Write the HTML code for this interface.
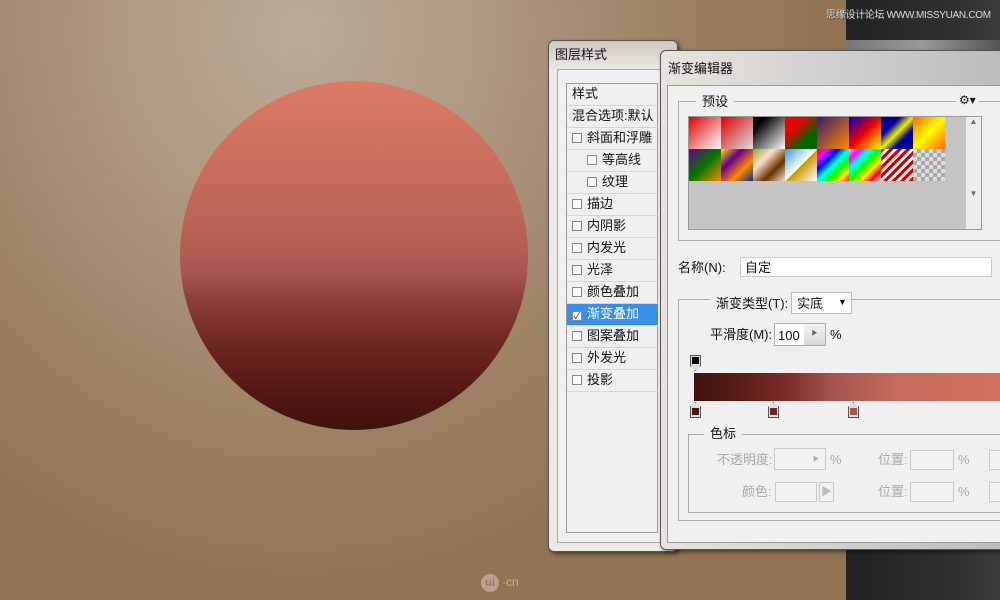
<!DOCTYPE html>
<html><head><meta charset="utf-8">
<style>
*{margin:0;padding:0;box-sizing:border-box}
body{width:1000px;height:600px;overflow:hidden;position:relative;font-family:"Liberation Sans","Noto Sans CJK SC",sans-serif;font-size:12px;color:#111;
background:radial-gradient(ellipse 520px 560px at 300px 30px,#bcab98 0%,#ad967e 40%,#9c7f62 75%,#927455 100%);}
.abs{position:absolute}
.circle{left:180px;top:81px;width:348px;height:349px;border-radius:50%;
background:linear-gradient(#dc7b66 0%,#c96d5e 25%,#b35e54 48%,#a95652 55%,#8a3f39 63%,#6e2722 75%,#561914 88%,#3f120d 100%);}
.dark{left:846px;top:0;width:154px;height:600px;background:linear-gradient(90deg,#222 0%,#2a2a2a 40%,#303030 70%,#3c3c3c 100%)}
.wm{top:10px;left:826px;color:#ddd;font-size:10px;white-space:nowrap;text-shadow:1px 1px 0 #333;line-height:12px;letter-spacing:-0.3px}
.dlg1{left:548px;top:40px;width:130px;height:512px;border:1px solid #555;border-radius:6px;background:linear-gradient(#cfc7be,#ece9e6 30px);box-shadow:2px 2px 4px rgba(0,0,0,.5)}
.dlg1 .in{position:absolute;left:8px;top:28px;right:0;bottom:8px;background:#f0f0f0;border:1px solid #aaa}
.list{left:566px;top:83px;width:92px;height:450px;border:1px solid #999;background:#f0f0f0}
.row{position:absolute;left:0;width:91px;height:22px;border-bottom:1px solid #d6d6d6;font-size:13px;line-height:19px;padding-left:5px;white-space:nowrap;overflow:hidden}
.cb{display:inline-block;width:10px;height:10px;border:1px solid #888;background:#fafafa;margin-right:5px;vertical-align:-1px}
.sel{background:#3a8ee6;color:#fff}
.dlg2{left:660px;top:50px;width:350px;height:500px;border:1px solid #555;border-radius:6px;background:linear-gradient(90deg,#e8e3de,#ccc 60%,#bbb);box-shadow:2px 2px 4px rgba(0,0,0,.5)}
.dlg2 .in{position:absolute;left:6px;top:34px;right:0;bottom:6px;background:#f0f0f0;border:1px solid #999}
.fs{border:1px solid #aaa}
.lbl{font-size:13px;white-space:nowrap;line-height:15px}
.sw{position:absolute;width:32px;height:32px}
.inp{background:#fff;border:1px solid #ccc}
.gray{color:#a8a8a8}
.dis{border:1px solid #c8c8c8;background:#f2f2f2}
</style></head><body>
<div class="abs circle"></div>
<div class="abs dark"></div>
<div class="abs" style="left:846px;top:40px;width:154px;height:12px;background:linear-gradient(90deg,#777,#999,#555)"></div>
<div class="abs wm">思缘设计论坛 WWW.MISSYUAN.COM</div>

<div class="abs dlg1"><div class="in"></div></div>
<div class="abs lbl" style="left:555px;top:47px">图层样式</div>
<div class="abs list">
<div class="row" style="top:0;height:22px">样式</div>
<div class="row" style="top:22px">混合选项:默认</div>
<div class="row" style="top:44px"><span class="cb"></span>斜面和浮雕</div>
<div class="row" style="top:66px;padding-left:20px"><span class="cb"></span>等高线</div>
<div class="row" style="top:88px;padding-left:20px"><span class="cb"></span>纹理</div>
<div class="row" style="top:110px"><span class="cb"></span>描边</div>
<div class="row" style="top:132px"><span class="cb"></span>内阴影</div>
<div class="row" style="top:154px"><span class="cb"></span>内发光</div>
<div class="row" style="top:176px"><span class="cb"></span>光泽</div>
<div class="row" style="top:198px"><span class="cb"></span>颜色叠加</div>
<div class="row sel" style="top:220px"><span class="cb" style="font-size:9px;line-height:8px;color:#226;text-align:center">✓</span>渐变叠加</div>
<div class="row" style="top:242px"><span class="cb"></span>图案叠加</div>
<div class="row" style="top:264px"><span class="cb"></span>外发光</div>
<div class="row" style="top:286px"><span class="cb"></span>投影</div>
</div>

<div class="abs dlg2"><div class="in"></div></div>
<div class="abs lbl" style="left:668px;top:61px">渐变编辑器</div>
<!-- presets -->
<div class="abs fs" style="left:678px;top:101px;width:330px;height:140px"></div>
<div class="abs lbl" style="left:696px;top:94px;background:#f0f0f0;padding:0 6px">预设</div>
<div class="abs" style="left:956px;top:93px;background:#f0f0f0;padding:0 3px;font-size:12px">⚙▾</div>
<div class="abs" style="left:688px;top:116px;width:294px;height:114px;background:#c4c4c4;border:1px solid #999"></div>
<div class="abs" style="left:966px;top:117px;width:15px;height:112px;background:#eee;font-size:8px;color:#666;text-align:center">▲<br><br><br><br><br><br><br><br>▼</div>
<div class="sw" style="left:689px;top:117px;background:linear-gradient(135deg,#d00,#fff)"></div>
<div class="sw" style="left:721px;top:117px;background:linear-gradient(135deg,#d00,#ddd)"></div>
<div class="sw" style="left:753px;top:117px;background:linear-gradient(135deg,#000 20%,#fff)"></div>
<div class="sw" style="left:785px;top:117px;background:linear-gradient(135deg,#e00 30%,#060 70%)"></div>
<div class="sw" style="left:817px;top:117px;background:linear-gradient(135deg,#3a1a6e,#f80)"></div>
<div class="sw" style="left:849px;top:117px;background:linear-gradient(135deg,#00c,#e00,#ff0)"></div>
<div class="sw" style="left:881px;top:117px;background:linear-gradient(135deg,#009 30%,#ee0 50%,#009 70%)"></div>
<div class="sw" style="left:913px;top:117px;background:linear-gradient(135deg,#f60,#ff0,#f60)"></div>
<div class="sw" style="left:689px;top:149px;background:linear-gradient(135deg,#608,#070,#f80)"></div>
<div class="sw" style="left:721px;top:149px;background:linear-gradient(135deg,#ee0,#608,#f80,#038)"></div>
<div class="sw" style="left:753px;top:149px;background:linear-gradient(135deg,#8a3,#fdc,#630,#fdc)"></div>
<div class="sw" style="left:785px;top:149px;background:linear-gradient(135deg,#39d,#fff 50%,#c90 52%,#fff)"></div>
<div class="sw" style="left:817px;top:149px;background:linear-gradient(135deg,red,#f0f,#00f,#0ff,#0f0,#ff0,red)"></div>
<div class="sw" style="left:849px;top:149px;background:linear-gradient(135deg,#ddd,#f0f,#0ff,#0f0,#ff0,#f00,#ddd)"></div>
<div class="sw" style="left:881px;top:149px;background:repeating-linear-gradient(135deg,#c00 0 3px,#fff 3px 6px)"></div>
<div class="sw" style="left:913px;top:149px;background:repeating-conic-gradient(#aaa 0 25%,#ddd 0 50%) 0 0/8px 8px"></div>
<!-- name -->
<div class="abs lbl" style="left:678px;top:260px">名称(N):</div>
<div class="abs inp" style="left:740px;top:257px;width:252px;height:20px"></div>
<div class="abs lbl" style="left:745px;top:260px">自定</div>
<!-- type -->
<div class="abs fs" style="left:678px;top:299px;width:330px;height:222px"></div>
<div class="abs lbl" style="left:710px;top:296px;background:#f0f0f0;padding:0 6px">渐变类型(T):</div>
<div class="abs inp" style="left:791px;top:292px;width:61px;height:22px;border-color:#bbb"></div>
<div class="abs lbl" style="left:797px;top:296px">实底</div>
<div class="abs" style="left:838px;top:297px;font-size:9px">▼</div>
<div class="abs lbl" style="left:710px;top:327px">平滑度(M):</div>
<div class="abs inp" style="left:774px;top:323px;width:52px;height:23px;border-color:#aaa"></div>
<div class="abs" style="left:804px;top:324px;width:21px;height:21px;background:linear-gradient(#f4f4f4,#d8d8d8);font-size:6px;color:#666;text-align:center;line-height:21px">▶</div>
<div class="abs lbl" style="left:778px;top:328px">100</div>
<div class="abs lbl" style="left:830px;top:327px">%</div>
<!-- gradient -->
<div class="abs" style="left:690px;top:355px;width:11px;height:16px;background:#ddd;border:1px solid #555;clip-path:polygon(0 0,100% 0,100% 70%,50% 100%,0 70%)"></div>
<div class="abs" style="left:692px;top:357px;width:7px;height:7px;background:#000"></div>
<div class="abs" style="left:694px;top:373px;width:310px;height:28px;background:linear-gradient(90deg,#3f130f 0%,#5a1d18 15%,#7c2c28 30%,#a45550 45%,#c56a5b 65%,#d4705e 100%)"></div>
<div class="abs" style="left:690px;top:402px;width:11px;height:16px;background:#ddd;border:1px solid #555;clip-path:polygon(50% 0,100% 30%,100% 100%,0 100%,0 30%)"></div>
<div class="abs" style="left:692px;top:408px;width:7px;height:7px;background:#4a1611"></div>
<div class="abs" style="left:768px;top:402px;width:11px;height:16px;background:#ddd;border:1px solid #555;clip-path:polygon(50% 0,100% 30%,100% 100%,0 100%,0 30%)"></div>
<div class="abs" style="left:770px;top:408px;width:7px;height:7px;background:#6c2722"></div>
<div class="abs" style="left:848px;top:402px;width:11px;height:16px;background:#ddd;border:1px solid #555;clip-path:polygon(50% 0,100% 30%,100% 100%,0 100%,0 30%)"></div>
<div class="abs" style="left:850px;top:408px;width:7px;height:7px;background:#a8544c"></div>
<!-- color stops -->
<div class="abs fs" style="left:688px;top:434px;width:320px;height:79px"></div>
<div class="abs lbl" style="left:704px;top:426px;background:#f0f0f0;padding:0 6px">色标</div>
<div class="abs lbl gray" style="left:717px;top:452px">不透明度:</div>
<div class="abs dis" style="left:774px;top:448px;width:52px;height:22px"></div>
<div class="abs gray" style="left:813px;top:454px;font-size:6px">▶</div>
<div class="abs lbl gray" style="left:830px;top:452px">%</div>
<div class="abs lbl gray" style="left:878px;top:452px">位置:</div>
<div class="abs dis" style="left:910px;top:450px;width:44px;height:20px"></div>
<div class="abs lbl gray" style="left:958px;top:452px">%</div>
<div class="abs dis" style="left:989px;top:450px;width:20px;height:20px"></div>
<div class="abs lbl gray" style="left:742px;top:484px">颜色:</div>
<div class="abs dis" style="left:775px;top:482px;width:42px;height:20px"></div>
<div class="abs dis" style="left:819px;top:482px;width:15px;height:20px;color:#bbb;font-size:11px;line-height:18px;text-align:center">▶</div>
<div class="abs lbl gray" style="left:878px;top:484px">位置:</div>
<div class="abs dis" style="left:910px;top:482px;width:44px;height:20px"></div>
<div class="abs lbl gray" style="left:958px;top:484px">%</div>
<div class="abs dis" style="left:989px;top:482px;width:20px;height:20px"></div>
<!-- logo -->
<div class="abs" style="left:481px;top:574px;width:18px;height:18px;border-radius:50%;background:rgba(230,220,210,.45);color:#9a7d60;font-size:11px;font-weight:bold;text-align:center;line-height:18px">ui</div>
<div class="abs" style="left:502px;top:575px;color:rgba(230,220,210,.6);font-size:12px">·cn</div>
</body></html>
